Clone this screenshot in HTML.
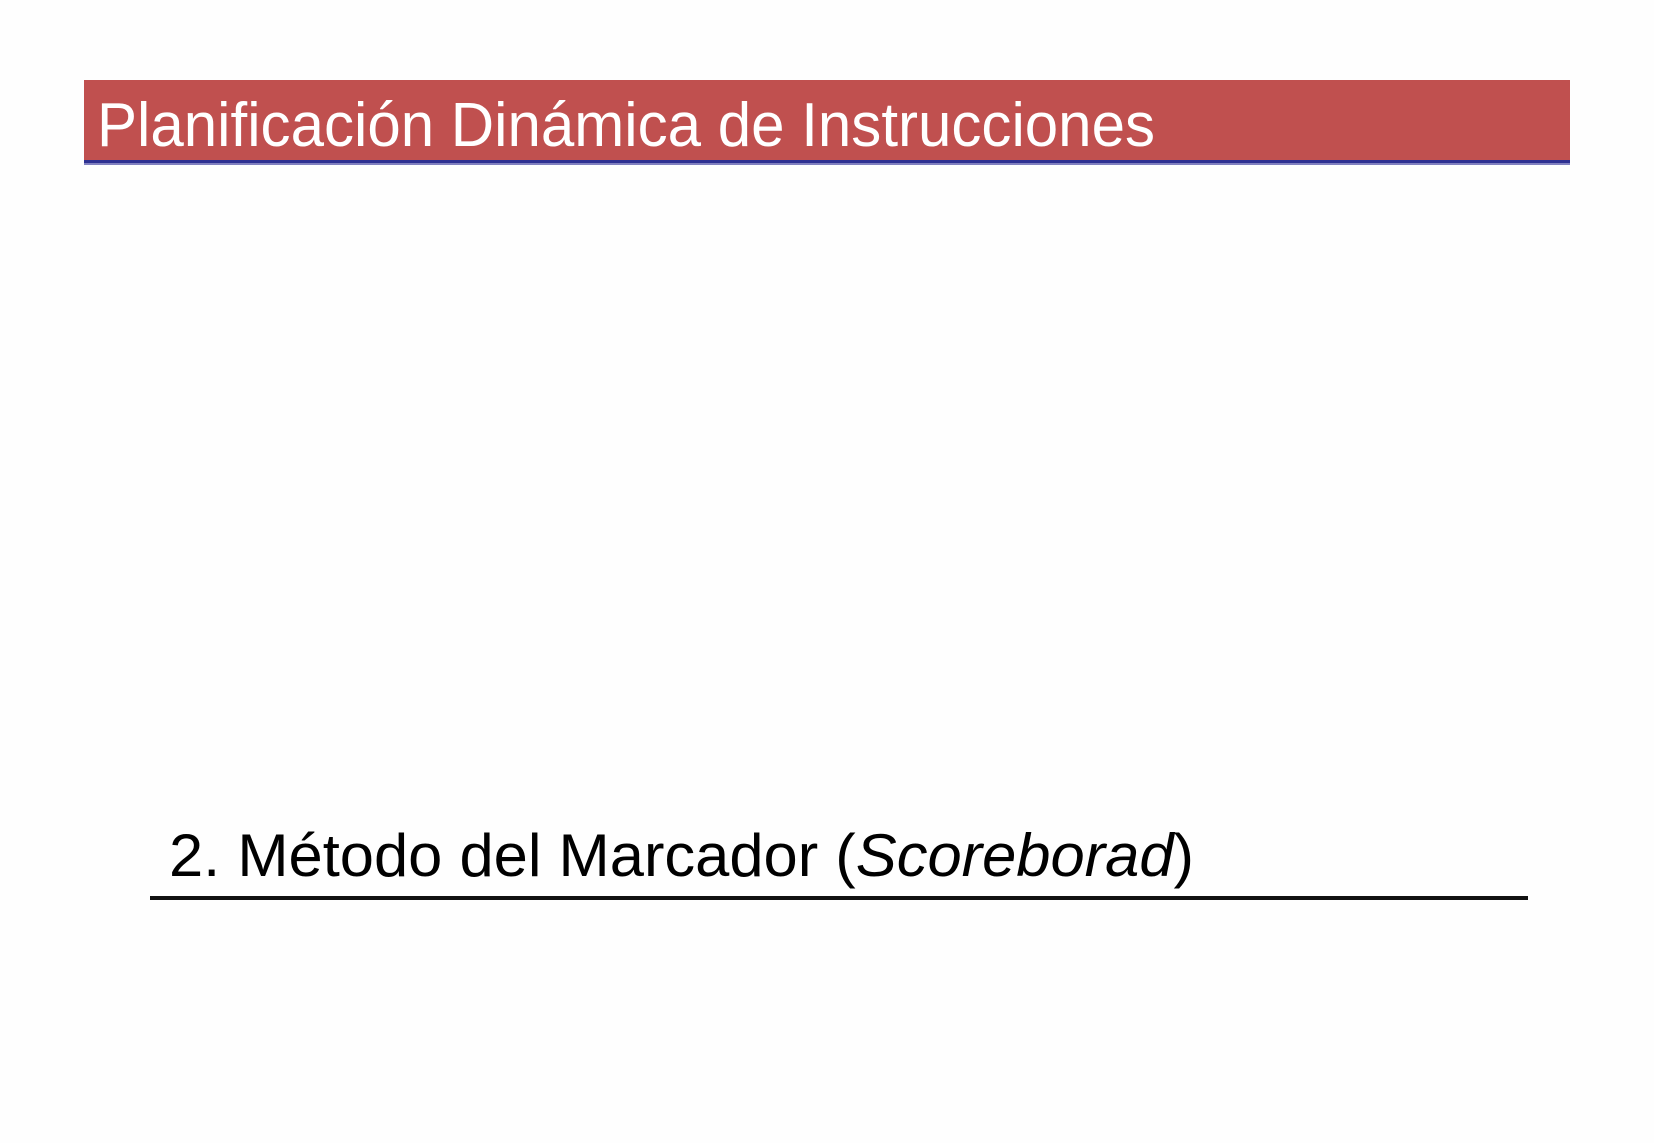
<!DOCTYPE html>
<html><head><meta charset="utf-8"><style>html,body{margin:0;padding:0;background:#fff;width:1654px;height:1143px;overflow:hidden}</style></head>
<body>
<svg width="1654" height="1143" xmlns="http://www.w3.org/2000/svg">
<rect x="0" y="0" width="1654" height="1143" fill="#fefefe"/>
<rect x="84" y="80" width="1486" height="83" fill="#c0504f"/>
<rect x="84" y="160" width="1486" height="3" fill="#2e3192"/>
<rect x="84" y="163" width="1486" height="2" fill="#8080c0"/>
<text x="97" y="146" font-family="Liberation Sans, sans-serif" font-size="62" fill="#fff" textLength="1058" lengthAdjust="spacingAndGlyphs">Planificación Dinámica de Instrucciones</text>
<text x="169" y="876" font-family="Liberation Sans, sans-serif" font-size="60" fill="#000" textLength="1025" lengthAdjust="spacingAndGlyphs">2. Método del Marcador (<tspan font-style="italic">Scoreborad</tspan>)</text>
<rect x="150" y="896" width="1378" height="4" fill="#111"/>
</svg>
</body></html>
